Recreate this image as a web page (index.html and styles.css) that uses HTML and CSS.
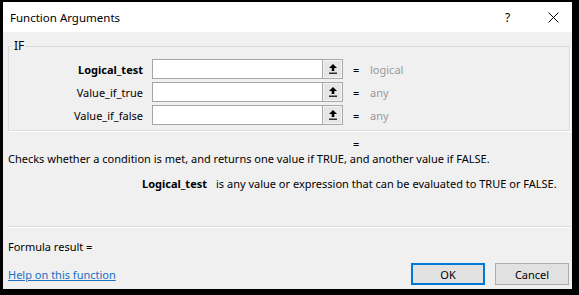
FILE: index.html
```html
<!DOCTYPE html>
<html lang="en">
<head>
<meta charset="UTF-8" />
<meta name="viewport" content="width=device-width, initial-scale=1" />
<title>Function Arguments</title>
<link rel="stylesheet" href="styles.css">
</head>
<body>
  <div class="dialog">
    <div class="titlebar">
      <span class="title">Function Arguments</span>
      <span class="help-btn">?</span>
      <span class="close-btn">
        <svg width="11" height="11" viewBox="0 0 11 11"><path d="M0.5 0.5 L10.5 10.5 M10.5 0.5 L0.5 10.5" stroke="#000" stroke-width="1" fill="none"/></svg>
      </span>
    </div>

    <div class="content">
      <fieldset class="args">
        <legend>IF</legend>

        <div class="arg-row">
          <label class="arg-name current">Logical_test</label>
          <div class="arg-field">
            <input type="text" />
            <button class="collapse">
              <svg width="8" height="10" viewBox="0 0 8 10"><path d="M4 0 L8 4 L5.3 4 L5.3 7 L2.7 7 L2.7 4 L0 4 Z" fill="#000"/><rect x="0" y="8.6" width="8" height="1.2" fill="#000"/></svg>
            </button>
          </div>
          <span class="eq">=</span>
          <span class="arg-value">logical</span>
        </div>

        <div class="arg-row">
          <label class="arg-name">Value_if_true</label>
          <div class="arg-field">
            <input type="text" />
            <button class="collapse">
              <svg width="8" height="10" viewBox="0 0 8 10"><path d="M4 0 L8 4 L5.3 4 L5.3 7 L2.7 7 L2.7 4 L0 4 Z" fill="#000"/><rect x="0" y="8.6" width="8" height="1.2" fill="#000"/></svg>
            </button>
          </div>
          <span class="eq">=</span>
          <span class="arg-value">any</span>
        </div>

        <div class="arg-row">
          <label class="arg-name">Value_if_false</label>
          <div class="arg-field">
            <input type="text" />
            <button class="collapse">
              <svg width="8" height="10" viewBox="0 0 8 10"><path d="M4 0 L8 4 L5.3 4 L5.3 7 L2.7 7 L2.7 4 L0 4 Z" fill="#000"/><rect x="0" y="8.6" width="8" height="1.2" fill="#000"/></svg>
            </button>
          </div>
          <span class="eq">=</span>
          <span class="arg-value">any</span>
        </div>
      </fieldset>

      <div class="result-row"><span class="eq">=</span></div>
      <p class="summary">Checks whether a condition is met, and returns one value if TRUE, and another value if FALSE.</p>
      <div class="arg-help">
        <b>Logical_test</b>
        <span>is any value or expression that can be evaluated to TRUE or FALSE.</span>
      </div>

      <div class="separator"></div>

      <div class="formula">Formula result =</div>

      <div class="footer">
        <a href="#" class="help-link">Help on this function</a>
        <div class="buttons">
          <button class="btn default">OK</button>
          <button class="btn">Cancel</button>
        </div>
      </div>
    </div>
  </div>
</body>
</html>
```

FILE: styles.css
```css
html, body {
  margin: 0;
  background: #000;
}
body {
  padding: 2px 7px 6px 3px;
  font-family: "Noto Sans", "Open Sans", sans-serif;
  font-size: 11px;
  color: #000;
}
.dialog {
  width: 569px;
  height: 287px;
  background: #f0f0f0;
  display: flex;
  flex-direction: column;
}
.titlebar {
  height: 30px;
  background: #fff;
  display: flex;
  align-items: center;
  padding-left: 7px;
}
.title {
  font-size: 11.5px;
  flex: 1;
}
.help-btn {
  font-size: 12px;
  width: 43px;
}
.close-btn {
  width: 24px;
  display: flex;
}
.content {
  padding: 0 1px 0 5px;
  display: flex;
  flex-direction: column;
}
fieldset.args {
  margin: 7px 1px 0 0;
  padding: 6px 0 5px 0;
  border: 1px solid #dcdcdc;
  box-shadow: 1px 1px 0 #fff;
  display: flex;
  flex-direction: column;
  gap: 3px;
}
fieldset.args legend {
  margin-left: 3px;
  padding: 0 2px;
  line-height: 14px;
  font-size: 12px;
}
.arg-row {
  display: flex;
  align-items: center;
  height: 20px;
}
.arg-name {
  width: 134px;
  text-align: right;
  margin-right: 9px;
}
.arg-name.current {
  font-weight: bold;
}
.arg-field {
  display: flex;
  height: 20px;
}
.arg-field input {
  width: 170px;
  height: 20px;
  box-sizing: border-box;
  border: 1px solid #a5a5a5;
  border-right: none;
  margin: 0;
  padding: 0 3px;
  background: #fff;
}
.collapse {
  width: 21px;
  height: 20px;
  box-sizing: border-box;
  border: 1px solid #a9a9a9;
  background: #e6e6e6;
  box-shadow: inset 0 0 0 1px #f4f4f4;
  padding: 0;
  margin: 0;
  display: flex;
  align-items: center;
  justify-content: center;
}
.eq {
  width: 17px;
  margin-left: 10px;
}
.arg-value {
  color: #999;
}
.result-row {
  margin-top: 5px;
  height: 15px;
  line-height: 15px;
  padding-left: 345px;
}
.result-row .eq {
  margin-left: 0;
}
.summary {
  margin: 0;
  line-height: 15px;
}
.arg-help {
  margin-top: 10px;
  display: flex;
  line-height: 15px;
}
.arg-help b {
  width: 199px;
  text-align: right;
  margin-right: 9px;
}
.separator {
  margin-top: 35px;
  border-top: 1px solid #dcdcdc;
  border-bottom: 1px solid #fff;
}
.formula {
  margin-top: 11px;
  line-height: 15px;
}
.footer {
  margin-top: 9px;
  display: flex;
  align-items: center;
  justify-content: space-between;
}
.help-link {
  color: #1a6fc0;
  text-decoration: underline;
}
.buttons {
  display: flex;
  gap: 10px;
  margin-right: 2px;
}
.btn {
  width: 74px;
  height: 22px;
  box-sizing: border-box;
  border: 1px solid #adadad;
  background: #e1e1e1;
  font-family: "Noto Sans", "Open Sans", sans-serif;
  font-size: 11px;
  color: #000;
  padding: 0;
}
.btn.default {
  border: 2px solid #0078d7;
}
```
